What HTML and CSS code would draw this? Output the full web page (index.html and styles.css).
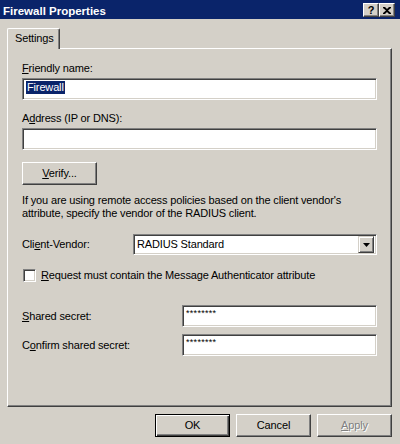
FILE: index.html
```html
<!DOCTYPE html>
<html>
<head>
<meta charset="utf-8">
<title>Firewall Properties</title>
<link rel="stylesheet" href="styles.css">
</head>
<body>
<div class="window">
  <div class="titlebar">
    <span class="title">Firewall Properties</span>
    <div class="caption-btns">
      <div class="cbtn help">?</div>
      <div class="cbtn close">
        <svg width="8" height="7" viewBox="0 0 8 7"><path d="M0 0h2l2 2 2-2h2v1L5 3.5 8 6v1H6L4 5 2 7H0V6l3-2.5L0 1z" fill="#000"/></svg>
      </div>
    </div>
  </div>

  <div class="tabs"><div class="tab">Settings</div></div>

  <div class="panel">
    <div class="label l-friendly"><u>F</u>riendly name:</div>
    <div class="field f-friendly"><span class="selected">Firewall</span></div>

    <div class="label l-address">A<u>d</u>dress (IP or DNS):</div>
    <div class="field f-address"></div>

    <div class="btn verify"><span><u>V</u>erify...</span></div>

    <p class="info">If you are using remote access policies based on the client vendor's<br>attribute, specify the vendor of the RADIUS client.</p>

    <div class="row vendor-row">
      <span class="row-label vendor-label">Cli<u>e</u>nt-Vendor:</span>
      <div class="select">
        <span class="select-text">RADIUS Standard</span>
        <div class="dropdown">
          <svg width="7" height="4" viewBox="0 0 7 4"><path d="M0 0h7L3.5 4z" fill="#000"/></svg>
        </div>
      </div>
    </div>

    <div class="row check-row">
      <div class="checkbox"></div>
      <span class="check-label"><u>R</u>equest must contain the Message Authenticator attribute</span>
    </div>

    <div class="row secret-row first">
      <span class="row-label secret-label"><u>S</u>hared secret:</span>
      <div class="field pw">********</div>
    </div>
    <div class="row secret-row second">
      <span class="row-label secret-label">C<u>o</u>nfirm shared secret:</span>
      <div class="field pw">********</div>
    </div>
  </div>

  <div class="buttons">
    <div class="btn default"><span>OK</span></div>
    <div class="btn"><span>Cancel</span></div>
    <div class="btn disabled"><span><u>A</u>pply</span></div>
  </div>
</div>
</body>
</html>
```

FILE: styles.css
```css
* { box-sizing: border-box; }

html, body {
  margin: 0;
  padding: 0;
  background: #d4d0c8;
}

body {
  width: 400px;
  height: 444px;
  overflow: hidden;
  font-family: "Liberation Sans", Arial, sans-serif;
  font-size: 11px;
  line-height: 13px;
  letter-spacing: -0.15px;
  color: #000;
}

u { text-decoration: underline; text-underline-offset: 1px; }

.window {
  display: flex;
  flex-direction: column;
}

/* Title bar */
.titlebar {
  height: 19px;
  background: #0a246a;
  display: flex;
  align-items: flex-start;
  padding-left: 3px;
}

.title {
  color: #fff;
  font-weight: bold;
  font-size: 11.5px;
  margin-top: 5px;
  letter-spacing: 0;
}

.caption-btns {
  margin-left: auto;
  margin-right: 5px;
  margin-top: 3px;
  display: flex;
  gap: 0;
}

.cbtn {
  width: 16px;
  height: 14px;
  background: #d4d0c8;
  border: 1px solid;
  border-color: #fff #404040 #404040 #fff;
  box-shadow: inset -1px -1px #808080;
  display: flex;
  align-items: center;
  justify-content: center;
}

.help {
  font-weight: bold;
  font-size: 11px;
  line-height: 11px;
  letter-spacing: 0;
}

/* Tabs */
.tabs {
  display: flex;
  margin-top: 9px;
  margin-left: 7px;
  position: relative;
  z-index: 1;
  height: 20px;
}

.tab {
  width: 53px;
  height: 21px;
  background: #d4d0c8;
  border-left: 1px solid #fff;
  border-top: 1px solid #fff;
  border-right: 1px solid #404040;
  border-top-left-radius: 2px;
  border-top-right-radius: 2px;
  box-shadow: inset -1px 0 #808080;
  padding: 3px 0 0 7px;
}

/* Panel */
.panel {
  margin-left: 7px;
  width: 385px;
  height: 359px;
  border: 1px solid;
  border-color: #fff #404040 #404040 #fff;
  box-shadow: inset -1px -1px #808080;
  padding: 0 14px 0 14px;
  display: flex;
  flex-direction: column;
}

.label { height: 13px; white-space: nowrap; }
.l-friendly { margin-top: 13px; }
.l-address { margin-top: 12px; }

.field {
  height: 22px;
  background: #fff;
  border: 1px solid;
  border-color: #808080 #fff #fff #808080;
  box-shadow: inset 1px 1px #404040, inset -1px -1px #d4d0c8;
  padding: 2px 0 0 3px;
  white-space: nowrap;
}

.f-friendly { margin-top: 3px; }
.f-address { margin-top: 3px; }

.selected {
  background: #0a246a;
  color: #fff;
  display: inline-block;
  height: 13px;
  padding: 0 1px;
}

/* Buttons */
.btn {
  width: 75px;
  height: 23px;
  background: #d4d0c8;
  border: 1px solid;
  border-color: #fff #404040 #404040 #fff;
  box-shadow: inset -1px -1px #808080;
  display: flex;
  align-items: center;
  justify-content: center;
  padding-bottom: 1px;
  white-space: nowrap;
}

.verify { margin-top: 12px; }

.info {
  margin: 9px 0 0 0;
  white-space: nowrap;
}

.row {
  display: flex;
  align-items: center;
}

.row-label { white-space: nowrap; flex: none; }
.vendor-row { margin-top: 14px; }
.vendor-label { width: 111px; }

.select {
  flex: 1;
  height: 21px;
  background: #fff;
  border: 1px solid;
  border-color: #808080 #fff #fff #808080;
  box-shadow: inset 1px 1px #404040, inset -1px -1px #d4d0c8;
  display: flex;
  align-items: center;
  padding: 2px 2px 2px 3px;
}

.select-text { flex: 1; }

.dropdown {
  width: 16px;
  height: 17px;
  background: #d4d0c8;
  border: 1px solid;
  border-color: #d4d0c8 #404040 #404040 #d4d0c8;
  box-shadow: inset 1px 1px #fff, inset -1px -1px #808080;
  display: flex;
  align-items: center;
  justify-content: center;
}

.check-row { margin-top: 14px; }

.checkbox {
  width: 13px;
  height: 13px;
  background: #fff;
  border: 1px solid;
  border-color: #808080 #fff #fff #808080;
  box-shadow: inset 1px 1px #404040, inset -1px -1px #d4d0c8;
  margin-left: 1px;
  margin-right: 5px;
}

.secret-row.first { margin-top: 23px; }
.secret-row.second { margin-top: 7px; }
.secret-label { width: 160px; }

.pw {
  flex: 1;
  font-size: 9px;
  line-height: 10px;
  padding: 2px 0 0 3px;
  letter-spacing: 0.3px;
}

.buttons {
  display: flex;
  justify-content: flex-end;
  gap: 6px;
  margin-top: 7px;
  padding-right: 8px;
}

.btn.default {
  border: 1px solid #000;
  box-shadow: inset 1px 1px #fff, inset -1px -1px #404040, inset -2px -2px #808080;
}

.btn.disabled {
  color: #808080;
  text-shadow: 1px 1px #fff;
}
```
